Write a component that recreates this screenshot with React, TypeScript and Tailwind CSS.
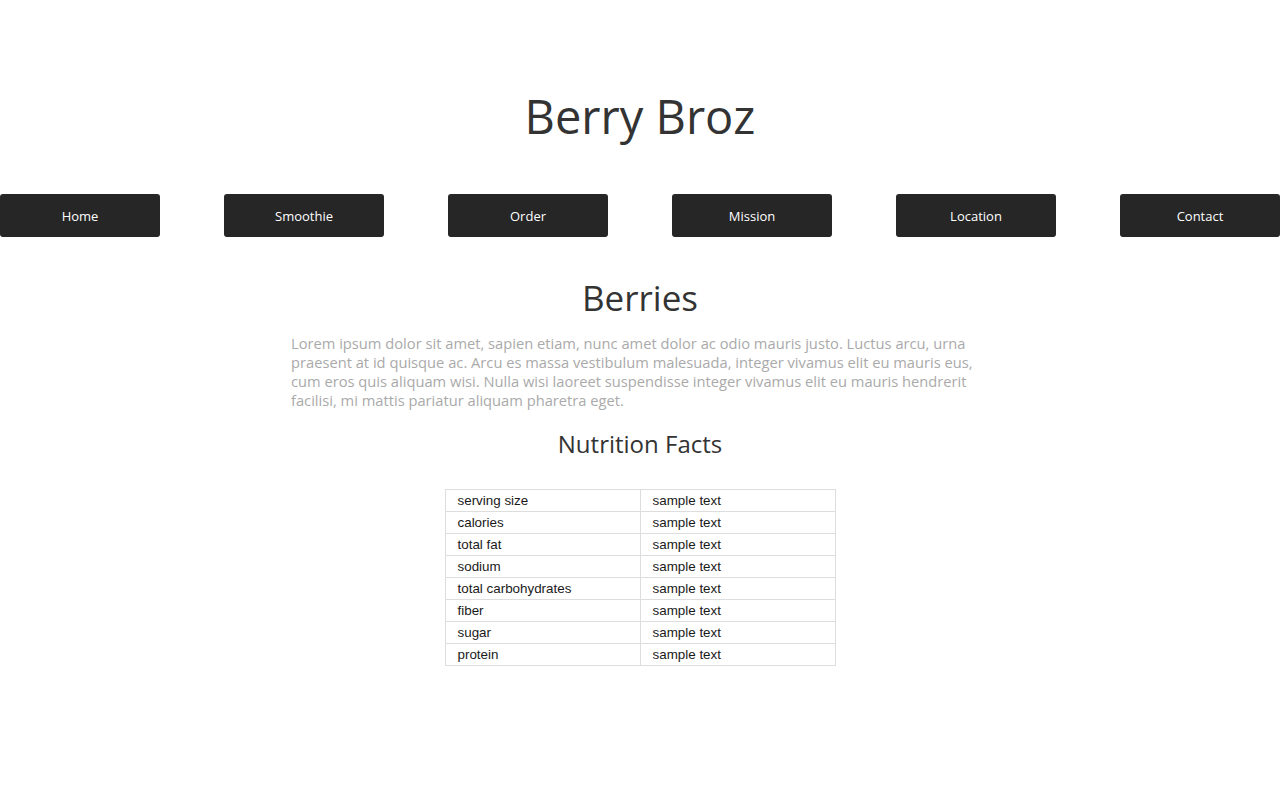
const navItems = ["Home", "Smoothie", "Order", "Mission", "Location", "Contact"]

const facts = [
  "serving size",
  "calories",
  "total fat",
  "sodium",
  "total carbohydrates",
  "fiber",
  "sugar",
  "protein",
]

function App() {
  return (
    <div className="min-h-[800px] bg-white font-['Open_Sans',sans-serif] text-[#333]">
      <header className="pt-[83px]">
        <h1 className="text-center text-[47px] leading-[66px]">Berry Broz</h1>
      </header>

      <nav className="mt-[45px] flex justify-between">
        {navItems.map((item) => (
          <a
            key={item}
            href="#"
            className="flex h-[43px] w-[160px] items-center justify-center rounded-[3px] bg-[#262626] pt-[2px] text-[13px] text-white"
          >
            {item}
          </a>
        ))}
      </nav>

      <main className="mx-auto w-[698px] pt-[38px]">
        <h2 className="text-center text-[35px] leading-[46px]">Berries</h2>
        <p className="mt-[13px] text-[14.7px] leading-[19px] text-[#aaa]">
          Lorem ipsum dolor sit amet, sapien etiam, nunc amet dolor ac odio mauris justo. Luctus arcu, urna
          praesent at id quisque ac. Arcu es massa vestibulum malesuada, integer vivamus elit eu mauris eus,
          cum eros quis aliquam wisi. Nulla wisi laoreet suspendisse integer vivamus elit eu mauris hendrerit
          facilisi, mi mattis pariatur aliquam pharetra eget.
        </p>

        <h3 className="mt-[17px] text-center text-[24px] leading-[34px]">Nutrition Facts</h3>

        <table className="mx-auto mt-[28px] w-[391px] border-collapse font-['Liberation_Sans',Arial,sans-serif] text-[13.4px] text-[#1a1a1a]">
          <tbody>
            {facts.map((f) => (
              <tr key={f} className="h-[22px]">
                <td className="w-1/2 border border-[#ddd] py-0 pl-[12px] leading-[20px]">{f}</td>
                <td className="w-1/2 border border-[#ddd] py-0 pl-[12px] leading-[20px]">sample text</td>
              </tr>
            ))}
          </tbody>
        </table>
      </main>
    </div>
  )
}

export default App
